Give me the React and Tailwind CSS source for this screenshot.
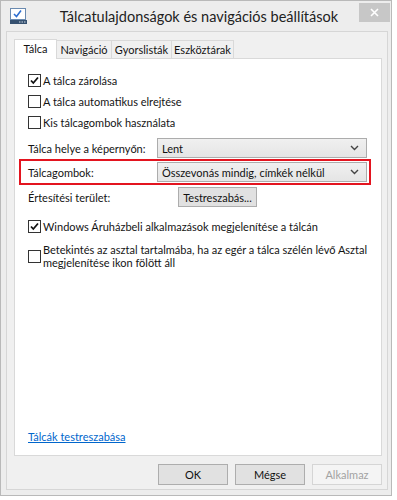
import React from "react";

const Check = ({ checked }) => (
  <span className="w-[13px] h-[13px] shrink-0 border border-[#333] bg-white flex items-center justify-center">
    {checked && (
      <svg width="11" height="11" viewBox="0 0 11 11">
        <path d="M2 5.5 L4.3 8 L9 2.5" fill="none" stroke="#111" strokeWidth="1.8" />
      </svg>
    )}
  </span>
);

const Combo = ({ value }) => (
  <div className="w-[210px] h-[20px] border border-[#acacac] bg-gradient-to-b from-[#f0f0f0] to-[#e5e5e5] flex items-center pl-[4px] pr-[7px] text-[#111]">
    <span className="flex-1 whitespace-nowrap">{value}</span>
    <svg width="9" height="6" viewBox="0 0 9 6">
      <path d="M1 1 L4.5 4.5 L8 1" fill="none" stroke="#444" strokeWidth="1.4" />
    </svg>
  </div>
);

const Button = ({ children, disabled }) => (
  <button
    className={`w-[70px] h-[21px] border ${
      disabled
        ? "border-[#d5d5d5] bg-[#f4f4f4] text-[#a2a2a2]"
        : "border-[#adadad] bg-[#e1e1e1] text-[#111]"
    }`}
  >
    {children}
  </button>
);

const tabs = [
  ["Tálca", "w-[43px]"],
  ["Navigáció", "w-[55px]"],
  ["Gyorslisták", "w-[60px]"],
  ["Eszköztárak", "w-[62px]"],
];

export default function App() {
  return (
    <div className="w-[397px] h-[500px] bg-white overflow-hidden font-['Lato',sans-serif] text-[11px] leading-none text-[#141414]">
      <div className="w-[392px] h-[496px] bg-[#ededed] border border-[#b9b9b9] flex flex-col">
        {/* title bar */}
        <div className="h-[30px] flex items-start">
          <svg className="ml-[9px] mt-[7px]" width="17" height="16" viewBox="0 0 17 16">
            <rect x="0.5" y="0.5" width="15" height="11" fill="#fff" stroke="#6a8ab0" />
            <path d="M4 6 L6.5 8.5 L11 2.5" fill="none" stroke="#2f6fd0" strokeWidth="1.6" />
            <rect x="0" y="12" width="17" height="4" fill="#35506f" />
            <rect x="9" y="13.5" width="1.5" height="1" fill="#cfd8e3" />
            <rect x="11.5" y="13.5" width="1.5" height="1" fill="#cfd8e3" />
            <rect x="14" y="13.5" width="1.5" height="1" fill="#cfd8e3" />
          </svg>
          <div className="flex-1 text-center text-[14.5px] text-[#222] mt-[9px] pl-[12px] whitespace-nowrap">
            Tálcatulajdonságok és navigációs beállítások
          </div>
          <div className="w-[31px] h-[19px] mt-[2px] mr-[1px] bg-[#c7c7c7] flex items-center justify-center">
            <svg width="9" height="9" viewBox="0 0 9 9">
              <path d="M1 1 L8 8 M8 1 L1 8" stroke="#fff" strokeWidth="1.6" />
            </svg>
          </div>
        </div>

        {/* client */}
        <div className="ml-[5px] mr-[3px] mb-[5px] flex-1 border border-[#d6d6d6] bg-[#f0f0f0] pt-[6px] px-[7px] flex flex-col">
          <div className="flex items-end h-[20px]">
            {tabs.map(([t, w], i) =>
              i === 0 ? (
                <div
                  key={t}
                  className={`${w} h-[20px] bg-white border border-b-0 border-[#d9d9d9] flex items-center justify-center relative z-10 -mb-px pb-[2px]`}
                >
                  {t}
                </div>
              ) : (
                <div
                  key={t}
                  className={`${w} h-[18px] bg-[#f0f0f0] border border-l-0 border-b-0 border-[#d9d9d9] flex items-center justify-center`}
                >
                  {t}
                </div>
              )
            )}
          </div>
          <div className="w-[368px] h-[398px] bg-white border border-[#d9d9d9] flex flex-col pt-[15px]">
            <div className="flex flex-col gap-[8px] pl-[13px]">
              <label className="flex items-center gap-[2px] h-[13px]">
                <Check checked />
                <span>A tálca zárolása</span>
              </label>
              <label className="flex items-center gap-[2px] h-[13px]">
                <Check />
                <span>A tálca automatikus elrejtése</span>
              </label>
              <label className="flex items-center gap-[2px] h-[13px]">
                <Check />
                <span>Kis tálcagombok használata</span>
              </label>
            </div>

            <div className="flex items-center mt-[9px] pl-[13px]">
              <span className="w-[129px] whitespace-nowrap">Tálca helye a képernyőn:</span>
              <Combo value="Lent" />
            </div>

            <div className="ml-[4px] mt-[1px] w-[352px] h-[26px] border-2 border-[#e3141f] flex items-center pl-[7px]">
              <span className="w-[129px] whitespace-nowrap">Tálcagombok:</span>
              <Combo value="Összevonás mindig, címkék nélkül" />
            </div>

            <div className="flex items-center mt-[2px] pl-[13px]">
              <span className="w-[150px] whitespace-nowrap">Értesítési terület:</span>
              <button className="w-[79px] h-[20px] border border-[#adadad] bg-[#e1e1e1] text-[#111]">
                Testreszabás...
              </button>
            </div>

            <label className="flex items-center gap-[2px] h-[13px] mt-[13px] pl-[13px]">
              <Check checked />
              <span className="whitespace-nowrap">Windows Áruházbeli alkalmazások megjelenítése a tálcán</span>
            </label>

            <label className="flex items-center gap-[2px] mt-[10px] pl-[13px]">
              <Check />
              <span className="leading-[13px] w-[336px]">
                Betekintés az asztal tartalmába, ha az egér a tálca szélén lévő Asztal megjelenítése ikon fölött áll
              </span>
            </label>

            <div className="mt-auto mb-[13px] pl-[13px]">
              <a className="text-[#0066cc] underline">Tálcák testreszabása</a>
            </div>
          </div>

          <div className="flex justify-end gap-[7px] mt-[8px] w-[368px]">
            <Button>OK</Button>
            <Button>Mégse</Button>
            <Button disabled>Alkalmaz</Button>
          </div>
        </div>
      </div>
    </div>
  );
}
